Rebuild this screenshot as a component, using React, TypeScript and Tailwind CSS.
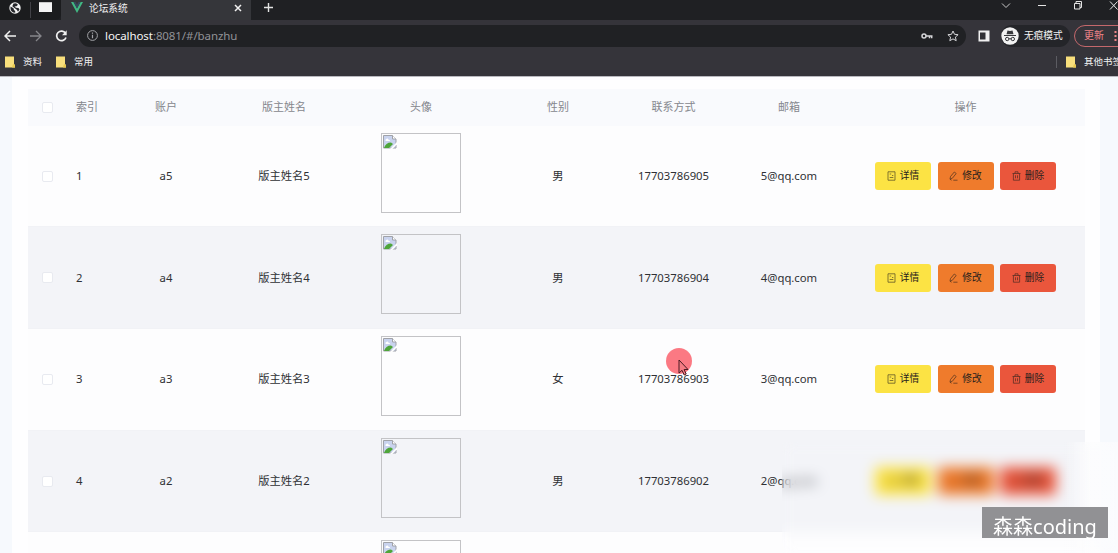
import React from "react";

const COLS = "grid grid-cols-[39px_38px_122px_114px_160px_114px_117px_114px_239px] items-center justify-items-center";

const rows = [
  { n: 1, k: 5, sex: "男" },
  { n: 2, k: 4, sex: "男" },
  { n: 3, k: 3, sex: "女" },
  { n: 4, k: 2, sex: "男" },
];

function Folder() {
  return (
    <svg width="10" height="12" viewBox="0 0 10 12">
      <path d="M0 .5h9v7.500l1 1v2.500H0z" fill="#f8df7c" />
      <path d="M8 8l2 1v2.500H7z" fill="#e9c94f" />
    </svg>
  );
}

function Globe() {
  return (
    <svg width="12" height="12" viewBox="0 0 12 12">
      <circle cx="6" cy="6" r="5.700" fill="#f4f4f4" />
      <path d="M1.500 4.500l3 1.800.5 1.700 1.200 1v1.800C3.500 10.800 1.500 8.800 1.500 6.500zM4.500 1.600L7 1.300l2 1.400-1.500 1.500-2 .2L7 5.800l2.500.2 1 1.500-1.500 2.200-1.200-2L5.500 6 3.300 4.200z" fill="#25262a" />
    </svg>
  );
}

function Check() {
  return <span className="block h-[11px] w-[11px] rounded-[2px] border border-[#e8eaf0] bg-white" />;
}

function BrokenImage() {
  return (
    <div className="mb-[6.500px] h-[80px] w-[80px] border border-[#c3c3c6] p-px">
      <svg width="14" height="14" viewBox="0 0 14 14">
        <path d="M.5.5h9L13 4v9H.5z" fill="#c9d3ee" stroke="#a0a2a8" />
        <path d="M2.500 5.500a1.500 1.500 0 013-.7 1.300 1.300 0 011.500 1.200H2.500z" fill="#fff" />
        <path d="M1 13c1-3.500 3.500-5.500 7-5.500L10 9l-4 4z" fill="#4ea53a" />
        <path d="M7 14L14 7v2.200L9.300 14z" fill="#fff" />
        <path d="M9.500.5V4H13" fill="#fff" stroke="#a0a2a8" />
      </svg>
    </div>
  );
}

const iconProps = { width: 9, height: 10, viewBox: "0 0 9 10", fill: "none", stroke: "currentColor", strokeWidth: 0.7, opacity: 0.8 };

function Actions() {
  const base = "flex h-7 w-[56px] items-center justify-center gap-1 rounded-[3px] text-[9.700px] text-[#27211c]";
  return (
    <div className="flex gap-[6.500px]">
      <button className={base + " bg-[#fce344]"}>
        <svg {...iconProps}><path d="M1 .8h7v8.400H1zM2.700 3h1.500M2.700 6.500h3.600M5 4.500h1.300" /></svg>
        <span>详情</span>
      </button>
      <button className={base + " bg-[#ef7b2c]"}>
        <svg {...iconProps}><path d="M1 8.200l.5-2.700L5.300 1l1.900 1.500-3.900 4.800zM4.300 9.200h4.200M1 8.200l1.500 1" /></svg>
        <span>修改</span>
      </button>
      <button className={base + " bg-[#ea563c]"}>
        <svg {...iconProps}><path d="M.5 2.500h8M1.400 2.500v6.700h6.200V2.500M3 2.500V.8h3v1.700M3.500 4.300v3M5.500 4.300v3" /></svg>
        <span>删除</span>
      </button>
    </div>
  );
}

function Browser() {
  return (
    <header className="h-[77px] shrink-0 overflow-hidden border-b border-[#b9b9bf] bg-[#35343a] text-[#f1f1f2]">
      <div className="flex h-[20px] bg-[#1f2023]">
        <div className="flex w-[61px] items-start rounded-br-md bg-[#1b1c1e] pl-[9px] pt-[2px]">
          <Globe />
          <span className="ml-[9px] h-4 w-px bg-[#414146]" />
          <span className="ml-[8px] h-[10px] w-[13px] border-t border-[#c9c9c9] bg-[#f4f4f4]" />
        </div>
        <div className="flex w-[190px] items-start bg-[#35363a] pl-[10px] pt-[2px]">
          <svg width="12" height="11" viewBox="0 0 12 11">
            <path d="M0 0h2.500L6 6.500 9.500 0H12L6 11z" fill="#41b883" />
            <path d="M2.500 0h2L6 2.800 7.500 0h2L6 6.500z" fill="#35495e" />
          </svg>
          <span className="ml-[6px] text-[9.700px] leading-[13px]">论坛系统</span>
          <svg className="ml-auto mr-[9px] mt-[2px]" width="8" height="8" viewBox="0 0 8 8" stroke="#f1f1f1" strokeWidth="1.500"><path d="M1 1l6 6M7 1L1 7" /></svg>
        </div>
        <svg className="ml-[12px] mt-[2px]" width="11" height="11" viewBox="0 0 11 11" stroke="#e3e3e3" strokeWidth="1.400"><path d="M5.500 1v9M1 5.500h9" /></svg>
        <div className="-mr-[9px] ml-auto flex gap-[26px] pt-px">
          <svg width="10" height="9" viewBox="0 0 10 9" fill="none" stroke="#c8c8c8"><path d="M1 2.500l4 4 4-4" /></svg>
          <svg width="10" height="9" viewBox="0 0 10 9" stroke="#e4e4e4"><path d="M1 4.500h8" /></svg>
          <svg width="10" height="9" viewBox="0 0 10 9" fill="none" stroke="#e4e4e4"><path d="M1.500 2.500h5.500v5.500H1.500zM3 2.500v-2h5.500v6H7" /></svg>
          <svg width="18" height="9" viewBox="0 0 18 9" stroke="#e4e4e4"><path d="M1 .5l7.500 8M8.500.5L1 8.500" /></svg>
        </div>
      </div>
      <div className="flex h-[31px] items-center pl-[4px]">
        <svg width="12" height="12" viewBox="0 0 12 12" fill="none" stroke="#f1f1f1" strokeWidth="1.500"><path d="M12 6H1.500M6 1L1 6l5 5" /></svg>
        <svg className="ml-[14px]" width="12" height="12" viewBox="0 0 12 12" fill="none" stroke="#85858a" strokeWidth="1.300"><path d="M0 6h10.500M6 1l5 5-5 5" /></svg>
        <svg className="ml-[13px]" width="13" height="12" viewBox="0 0 13 12" fill="none" stroke="#f1f1f1" strokeWidth="1.700"><path d="M10.500 3.200A4.800 4.800 0 1011 7.500" /><path d="M11.700.3v5H7z" fill="#f1f1f1" stroke="none" /></svg>
        <div className="ml-[11px] flex h-[22px] w-[887px] items-center rounded-full bg-[#202124] pl-[8px] pr-[7px]">
          <svg width="11" height="11" viewBox="0 0 11 11" fill="none" stroke="#a3a4a8"><circle cx="5.500" cy="5.500" r="4.900" /><path d="M5.500 4.800v3.400M5.500 2.500v1.200" strokeWidth="1.200" /></svg>
          <span className="ml-[7px] text-[11.500px] leading-[18px] tracking-[-0.08px] text-[#919297]"><span className="text-[#f5f5f5]">localhost</span>:8081/#/banzhu</span>
          <svg className="ml-auto" width="12" height="8" viewBox="0 0 12 8" fill="none" stroke="#d5d5d8" strokeWidth="1.500"><circle cx="3" cy="4" r="2" /><path d="M5 4h6.500M8.500 4v2.300M10.700 4v2.300" /></svg>
          <svg className="ml-[14px]" width="12" height="12" viewBox="0 0 12 12" fill="none" stroke="#d5d5d8"><path d="M6 1l1.500 3.300 3.600.4-2.700 2.400.8 3.600L6 8.900l-3.200 1.800.8-3.600L.9 4.700l3.600-.4z" /></svg>
        </div>
        <svg className="ml-[12px]" width="12" height="12" viewBox="0 0 12 12"><path d="M.5.5h11v11H.5z" fill="#f0f0f0" /><path d="M2 2.500h5.500v7H2z" fill="#303035" /></svg>
        <div className="ml-[11px] flex h-[22px] w-[69px] items-center rounded-full bg-[#242529]">
          <svg width="18" height="18" viewBox="0 0 18 18"><circle cx="9" cy="9" r="8.700" fill="#f2f2f2" /><path d="M5.500 7.300L6.500 3.500l2.500.5 2.500-.5 1 3.800zM3 8h12v1H3z" fill="#37383c" /><g fill="none" stroke="#37383c"><circle cx="6.200" cy="12" r="1.700" /><circle cx="11.800" cy="12" r="1.700" /><path d="M7.900 11.800h2.200" /></g></svg>
          <span className="ml-[5px] whitespace-nowrap pt-px text-[9.700px]">无痕模式</span>
        </div>
        <div className="-mr-6 ml-[4px] flex h-[22px] w-[68px] shrink-0 items-center rounded-full border border-[#c4686c] pl-[9px] text-[10px] text-[#ef8589]">
          更新
          <svg className="ml-[10px]" width="3" height="12" viewBox="0 0 3 12" fill="#ef8589"><path d="M.5 1h2v2h-2zM.5 5h2v2h-2zM.5 9h2v2h-2z" /></svg>
        </div>
      </div>
      <div className="flex h-[22px] items-center whitespace-nowrap pl-[5px] text-[9.500px]">
        <Folder /><span className="ml-[8px]">资料</span>
        <span className="ml-[14px] flex"><Folder /></span><span className="ml-[8px]">常用</span>
        <span className="ml-auto h-[12px] w-px bg-[#5c5c62]" />
        <span className="ml-[9px] flex"><Folder /></span>
        <span className="ml-[8px] w-[34px] shrink-0 overflow-hidden">其他书签</span>
      </div>
    </header>
  );
}

export default function App() {
  return (
    <div className="relative flex h-[553px] w-[1118px] flex-col overflow-hidden bg-[#f6f9fd] font-['Noto_Sans','Noto_Sans_CJK_SC',sans-serif]">
      <Browser />
      <main className="ml-[12px] h-[476px] w-[1088px] bg-[#fefeff] pl-[16px] pt-[12px]">
        <div className="w-[1057px] text-[11.300px] leading-[16px] text-[#2f3034]">
          <div className={COLS + " h-[36.700px] bg-[#f9fafd] text-[11px] text-[#85878d]"}>
            <Check />
            <span className="ml-[9px] justify-self-start whitespace-nowrap">索引</span>
            <span>账户</span><span>版主姓名</span><span>头像</span><span>性别</span><span>联系方式</span><span>邮箱</span><span>操作</span>
          </div>
          {rows.map((r) => (
            <div key={r.n} className={COLS + " h-[101.700px] border-b border-[#f1f2f6] odd:bg-[#f3f4f8] even:bg-[#fdfdfe]"}>
              <Check />
              <span className="ml-[9px] justify-self-start">{r.n}</span>
              <span>a{r.k}</span>
              <span>版主姓名{r.k}</span>
              <BrokenImage />
              <span>{r.sex}</span>
              <span>1770378690{r.k}</span>
              <span>{r.k}@qq.com</span>
              <Actions />
            </div>
          ))}
          <div className={COLS + " h-[101.700px] bg-[#fdfdfe]"}>
            <span className="col-start-5"><BrokenImage /></span>
          </div>
        </div>
      </main>
      <div className="absolute left-[782px] top-[442px] h-[111px] w-[336px] bg-[linear-gradient(to_right,transparent_84%,#fcfcfdb0_92%)] backdrop-blur-[7px]" />
      <div className="absolute left-[982px] top-[507px] flex h-[31px] w-[126px] items-center justify-center whitespace-nowrap bg-[#919194] pt-[9px] text-[20px] leading-[22px] text-white">森森coding</div>
      <div className="absolute left-[666px] top-[348px] h-[26px] w-[26px] rounded-full bg-[#fb6a75]/90" />
      <svg className="absolute left-[678px] top-[359px]" width="11" height="18" viewBox="0 0 11 18"><path d="M1 1v13l3-2.700 2.200 4.700 2-1L6.100 10.500H10z" fill="#f47b83" stroke="#4a1b22" /></svg>
    </div>
  );
}
